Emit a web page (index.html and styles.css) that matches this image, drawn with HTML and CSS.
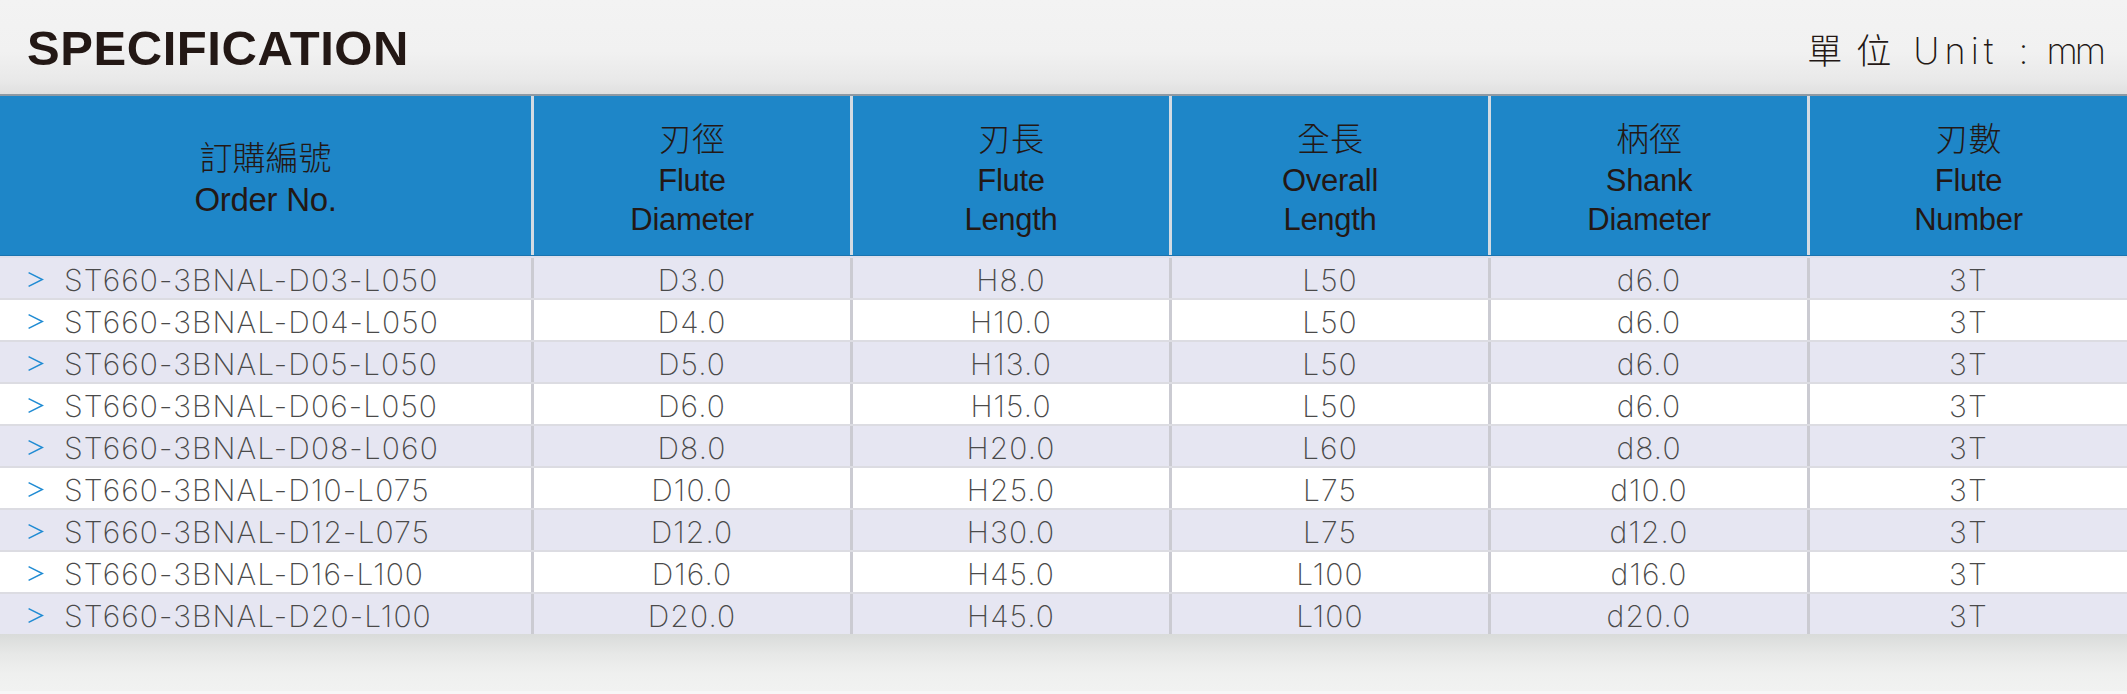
FILE: index.html
```html
<!DOCTYPE html>
<html lang="zh-Hant">
<head>
<meta charset="utf-8">
<title>Specification</title>
<link rel="stylesheet" href="styles.css">
</head>
<body>
<div class="page">
  <div class="topbar">
    <h1 class="title">SPECIFICATION</h1>
    <div class="unit"><span class="u-zh">單</span><span class="u-zh u-zh2">位</span><span class="u-en">Unit</span><span class="u-colon">:</span><span class="u-mm">mm</span></div>
  </div>
  <div class="table">
    <div class="row head">
      <div class="cell"><span class="zh">訂購編號</span><span class="en en-lg">Order No.</span></div>
      <div class="cell"><span class="zh">刃徑</span><span class="en">Flute</span><span class="en">Diameter</span></div>
      <div class="cell"><span class="zh">刃長</span><span class="en">Flute</span><span class="en">Length</span></div>
      <div class="cell"><span class="zh">全長</span><span class="en">Overall</span><span class="en">Length</span></div>
      <div class="cell"><span class="zh">柄徑</span><span class="en">Shank</span><span class="en">Diameter</span></div>
      <div class="cell"><span class="zh">刃數</span><span class="en">Flute</span><span class="en">Number</span></div>
    </div>
    <div class="row body">
      <div class="cell order"><svg class="chev" viewBox="0 0 16 16"><path d="M1.5 1.5 L14.5 8 L1.5 14.5"/></svg><span>ST660-3BNAL-D03-L050</span></div>
      <div class="cell">D3.0</div><div class="cell">H8.0</div><div class="cell">L50</div><div class="cell">d6.0</div><div class="cell">3T</div>
    </div>
    <div class="row body">
      <div class="cell order"><svg class="chev" viewBox="0 0 16 16"><path d="M1.5 1.5 L14.5 8 L1.5 14.5"/></svg><span>ST660-3BNAL-D04-L050</span></div>
      <div class="cell">D4.0</div><div class="cell">H10.0</div><div class="cell">L50</div><div class="cell">d6.0</div><div class="cell">3T</div>
    </div>
    <div class="row body">
      <div class="cell order"><svg class="chev" viewBox="0 0 16 16"><path d="M1.5 1.5 L14.5 8 L1.5 14.5"/></svg><span>ST660-3BNAL-D05-L050</span></div>
      <div class="cell">D5.0</div><div class="cell">H13.0</div><div class="cell">L50</div><div class="cell">d6.0</div><div class="cell">3T</div>
    </div>
    <div class="row body">
      <div class="cell order"><svg class="chev" viewBox="0 0 16 16"><path d="M1.5 1.5 L14.5 8 L1.5 14.5"/></svg><span>ST660-3BNAL-D06-L050</span></div>
      <div class="cell">D6.0</div><div class="cell">H15.0</div><div class="cell">L50</div><div class="cell">d6.0</div><div class="cell">3T</div>
    </div>
    <div class="row body">
      <div class="cell order"><svg class="chev" viewBox="0 0 16 16"><path d="M1.5 1.5 L14.5 8 L1.5 14.5"/></svg><span>ST660-3BNAL-D08-L060</span></div>
      <div class="cell">D8.0</div><div class="cell">H20.0</div><div class="cell">L60</div><div class="cell">d8.0</div><div class="cell">3T</div>
    </div>
    <div class="row body">
      <div class="cell order"><svg class="chev" viewBox="0 0 16 16"><path d="M1.5 1.5 L14.5 8 L1.5 14.5"/></svg><span>ST660-3BNAL-D10-L075</span></div>
      <div class="cell">D10.0</div><div class="cell">H25.0</div><div class="cell">L75</div><div class="cell">d10.0</div><div class="cell">3T</div>
    </div>
    <div class="row body">
      <div class="cell order"><svg class="chev" viewBox="0 0 16 16"><path d="M1.5 1.5 L14.5 8 L1.5 14.5"/></svg><span>ST660-3BNAL-D12-L075</span></div>
      <div class="cell">D12.0</div><div class="cell">H30.0</div><div class="cell">L75</div><div class="cell">d12.0</div><div class="cell">3T</div>
    </div>
    <div class="row body">
      <div class="cell order"><svg class="chev" viewBox="0 0 16 16"><path d="M1.5 1.5 L14.5 8 L1.5 14.5"/></svg><span>ST660-3BNAL-D16-L100</span></div>
      <div class="cell">D16.0</div><div class="cell">H45.0</div><div class="cell">L100</div><div class="cell">d16.0</div><div class="cell">3T</div>
    </div>
    <div class="row body">
      <div class="cell order"><svg class="chev" viewBox="0 0 16 16"><path d="M1.5 1.5 L14.5 8 L1.5 14.5"/></svg><span>ST660-3BNAL-D20-L100</span></div>
      <div class="cell">D20.0</div><div class="cell">H45.0</div><div class="cell">L100</div><div class="cell">d20.0</div><div class="cell">3T</div>
    </div>
  </div>
  <div class="footer"></div>
</div>
</body>
</html>
```
FILE: styles.css
```css
* { box-sizing: border-box; }
html, body { margin: 0; padding: 0; }
body {
  width: 2127px;
  height: 694px;
  overflow: hidden;
  background: #f1f1f1;
  font-family: "Liberation Sans", Arial, "Noto Sans CJK TC", sans-serif;
}
.page { width: 2127px; height: 694px; display: flex; flex-direction: column; }

.topbar {
  height: 94px;
  display: flex;
  align-items: center;
  justify-content: space-between;
  padding: 2px 24px 0 27px;
  background: linear-gradient(to bottom, #f3f3f3 0%, #f1f1f1 55%, #e9e9e9 85%, #e0e0e0 100%);
}
.title {
  margin: 0;
  font-family: "Liberation Sans", Arial, sans-serif;
  font-weight: 700;
  font-size: 49px;
  line-height: 1;
  color: #231815;
  letter-spacing: 0.55px;
}
.unit {
  display: flex;
  align-items: baseline;
  color: #231815;
  font-family: Inter, Roboto, sans-serif;
  font-weight: 200;
  font-size: 36px;
}
.u-zh {
  font-family: "Noto Sans CJK TC", sans-serif;
  font-weight: 300;
  font-size: 35px;
}
.u-zh2 { margin-left: 14px; }
.u-en { margin-left: 22px; letter-spacing: 5px; }
.u-colon { margin-left: 20px; }
.u-mm { margin-left: 18px; letter-spacing: -3px; }

.table { display: flex; flex-direction: column; }
.row {
  display: grid;
  grid-template-columns: 531px 319px 319px 319px 319px 1fr;
}
.head {
  height: 162px;
  border-top: 2px solid #8e99a3;
  border-bottom: 1px solid #1a74b0;
  background: #1e86c8;
}
.head .cell {
  display: flex;
  flex-direction: column;
  align-items: center;
  justify-content: center;
  color: #231815;
  padding-top: 2px;
}
.head .cell + .cell { border-left: 3px solid #d3dbe3; }
.zh {
  font-family: "Noto Sans CJK TC", sans-serif;
  font-weight: 300;
  font-size: 33px;
  line-height: 44px;
  margin-bottom: 2px;
}
.en {
  font-family: "Liberation Sans", Arial, sans-serif;
  font-size: 31px;
  line-height: 39px;
  letter-spacing: -0.3px;
}
.en-lg { font-size: 33px; }

.body {
  height: 42px;
  border-top: 2px solid #dcdce2;
  background: #e6e6f2;
}
.body:nth-child(odd) { background: #ffffff; }
.body:nth-child(2) { border-top-color: #dfe0ec; }
.body .cell {
  display: flex;
  align-items: center;
  justify-content: center;
  padding-top: 3px;
  font-family: Inter, Roboto, "Liberation Sans", sans-serif;
  font-weight: 200;
  font-size: 30px;
  color: #4a4a4a;
  letter-spacing: 1.1px;
}
.body .cell + .cell { border-left: 3px solid #cbcbd2; }
.body .cell.order {
  justify-content: flex-start;
  padding-left: 27px;
  gap: 20px;
}
.chev {
  width: 17px;
  height: 17px;
  flex: none;
  fill: none;
  stroke: #1f8bd3;
  stroke-width: 1.4;
}

.footer {
  flex: 1;
  border-bottom: 3px solid #f7f7f7;
  background: linear-gradient(to bottom, #d9dbda 0%, #e7e8e7 35%, #eff0ef 70%, #f1f2f1 100%);
}
```
